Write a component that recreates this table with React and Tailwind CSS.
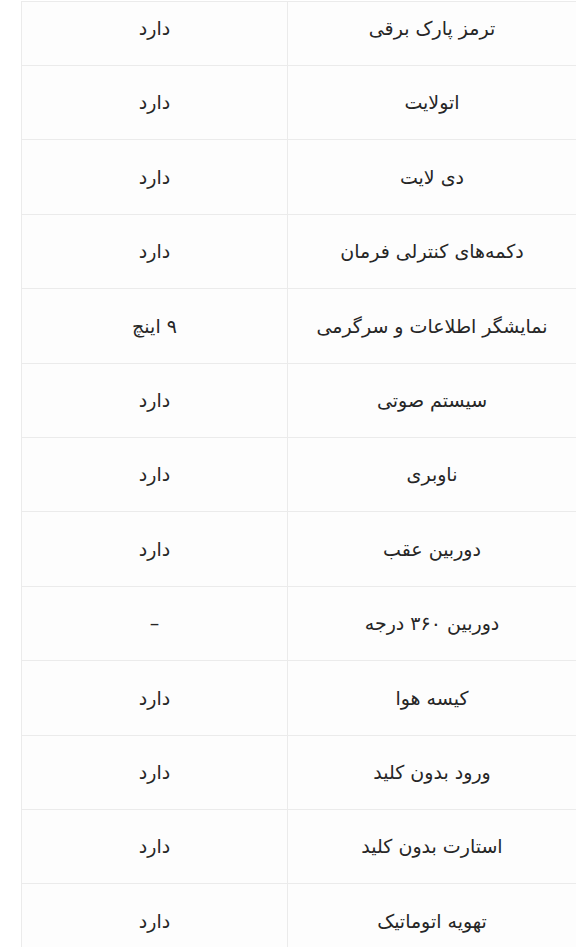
import React from "react";

const rows = [
  { label: "ترمز پارک برقی", value: "دارد" },
  { label: "اتولایت", value: "دارد" },
  { label: "دی لایت", value: "دارد" },
  { label: "دکمه‌های کنترلی فرمان", value: "دارد" },
  { label: "نمایشگر اطلاعات و سرگرمی", value: "۹ اینچ" },
  { label: "سیستم صوتی", value: "دارد" },
  { label: "ناوبری", value: "دارد" },
  { label: "دوربین عقب", value: "دارد" },
  { label: "دوربین ۳۶۰ درجه", value: "–" },
  { label: "کیسه هوا", value: "دارد" },
  { label: "ورود بدون کلید", value: "دارد" },
  { label: "استارت بدون کلید", value: "دارد" },
  { label: "تهویه اتوماتیک", value: "دارد" },
];

const App = () => {
  return (
    <div
      dir="rtl"
      className="w-[576px] h-[947px] overflow-hidden bg-white text-[#262626]"
      style={{ fontFamily: '"DejaVu Sans", "Noto Sans", sans-serif' }}
    >
      <div className="mt-px ml-[21px] border-t border-l border-[#ebebeb] bg-[#fdfdfd]">
        {rows.map((row, i) => (
          <div
            key={i}
            className={
              i === 0
                ? "grid grid-cols-[1fr_266px] h-[64px] border-b border-[#ebebeb]"
                : "grid grid-cols-[1fr_266px] h-[74.4px] border-b border-[#ebebeb]"
            }
          >
            <div
              className={
                i === 0
                  ? "flex items-center justify-center pb-[10px] text-[19px]"
                  : "flex items-center justify-center text-[19px]"
              }
            >
              {row.label}
            </div>
            <div
              className={
                i === 0
                  ? "flex items-center justify-center border-r border-[#ebebeb] pb-[10px] text-[19px]"
                  : "flex items-center justify-center border-r border-[#ebebeb] text-[19px]"
              }
            >
              {row.value}
            </div>
          </div>
        ))}
      </div>
    </div>
  );
};

export default App;
